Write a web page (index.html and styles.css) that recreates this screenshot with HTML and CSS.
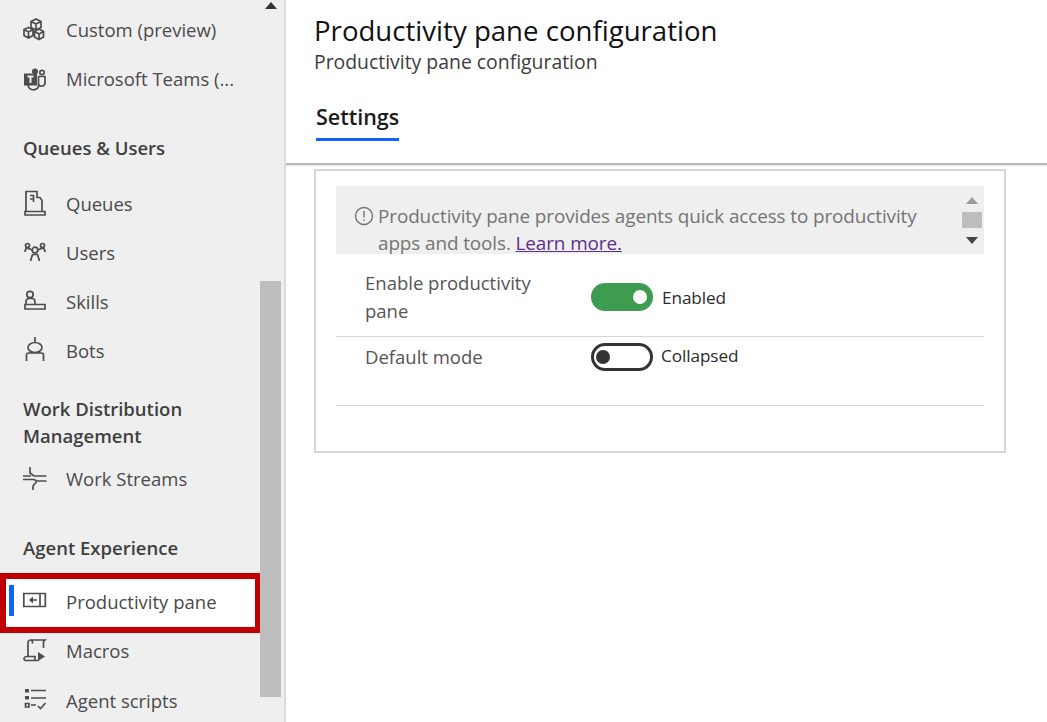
FILE: index.html
```html
<!DOCTYPE html>
<html lang="en">
<head>
    <meta charset="UTF-8">
    <title>Productivity pane configuration</title>
    <link rel="stylesheet" href="styles.css">
</head>
<body>
    <div class="page">
        <nav class="sidebar">
            <div class="nav-list">
                <a class="nav-item">
                    <svg class="nav-icon" viewBox="0 0 24 24"><path d="M13 1l5 2.500v6L13 12 8 9.500v-6zM8 3.500L13 6l5-2.500M13 6v6M5.500 9.500l4.500 2v6l-4.500 2.500L1 17.500v-6zM1 11.500l4.500 2.500 4.500-2.500M5.500 14v6M16 11l4.500 2.500v5.500L16 21.500 11.500 19v-5.500zM11.500 13.500L16 16l4.500-2.500M16 16v5.500"/></svg>
                    <span>Custom (preview)</span>
                </a>
                <a class="nav-item">
                    <svg class="nav-icon" viewBox="0 0 24 24"><path d="M5 18a5.500 5.500 0 0 0 10.500 1.500V9"/><path class="solid" d="M1 6.500h13v12H1z"/><circle class="solid" cx="12" cy="4.500" r="3"/><circle cx="19" cy="5.500" r="2.200"/><path d="M15.500 9.500h6.500v6a3.500 3.500 0 0 1-6.500 2"/><path class="cut" d="M4.500 9.500h6M7.500 9.500v6.500"/></svg>
                    <span>Microsoft Teams (...</span>
                </a>

                <h3 class="nav-heading heading-queues">Queues &amp; Users</h3>
                <a class="nav-item">
                    <svg class="nav-icon" viewBox="0 0 24 24"><path d="M3 19.500V-.500h11v6h3l2 3v11M2 19.500h20V23H2zM7 3.500h3.500V10M7 7h3"/></svg>
                    <span>Queues</span>
                </a>
                <a class="nav-item">
                    <svg class="nav-icon" viewBox="0 0 24 24"><circle cx="4.500" cy="4.500" r="2"/><circle cx="19.500" cy="4.500" r="2"/><circle cx="12" cy="9" r="2.800"/><path d="M2 11c0-2 .5-3.500 2.500-4l4.500 2M22 11c0-2-.5-3.500-2.500-4L15 9M7.500 20l2-6.500h5l2 6.500"/></svg>
                    <span>Users</span>
                </a>
                <a class="nav-item">
                    <svg class="nav-icon" viewBox="0 0 24 24"><circle cx="7" cy="4.500" r="3.200"/><path d="M3 14.500v-3a3 3 0 0 1 3-3h3a3 3 0 0 1 3 3v3M2 14.500h20v4.500H2z"/></svg>
                    <span>Skills</span>
                </a>
                <a class="nav-item">
                    <svg class="nav-icon" viewBox="0 0 24 24"><path d="M12 -2v5M5 8.500a7 5 0 0 1 14 0 7 5 0 0 1-14 0zM3.500 22v-6a2 2 0 0 1 2-2h13a2 2 0 0 1 2 2v6M9 8h.01M15 8h.01"/></svg>
                    <span>Bots</span>
                </a>

                <h3 class="nav-heading heading-work">Work Distribution Management</h3>
                <a class="nav-item">
                    <svg class="nav-icon" viewBox="0 0 24 24"><path d="M7 0v6l4 3h12.500M0 9h8M0 12.500h11l3 1.500h9.500M10 23v-4l4-5"/></svg>
                    <span>Work Streams</span>
                </a>

                <h3 class="nav-heading heading-agent">Agent Experience</h3>
                <a class="nav-item active">
                    <svg class="nav-icon" viewBox="0 0 24 24"><path d="M.8 3.500h21.500v13H.8zM17 3.500v13M14 10H9"/><path class="solid" d="M6 10l4-3.500v7z"/></svg>
                    <span>Productivity pane</span>
                </a>
                <a class="nav-item">
                    <svg class="nav-icon" viewBox="0 0 24 24"><path d="M5 17.500V3.500A2.500 2.500 0 0 1 7.500 1H22l-1.500 1.500V9M7.500 1c1.500 0 2 1 2 2.500v1M4 17.500h8v4H3.500A2 2 0 0 1 1 19.500c0-1 1.500-2 3-2zM12 21.500h4"/><path class="solid" d="M15 13l7 4.500-7 4.500z"/></svg>
                    <span>Macros</span>
                </a>
                <a class="nav-item">
                    <svg class="nav-icon" viewBox="0 0 24 24"><path class="solid" d="M2 0h4v3.500H2zM2 7h4v3.500H2z"/><path d="M2.500 14.500h3.500V18H2.500zM8 1.500h15M8 9h15M8 16h5M15 17l2.500 2.500 5-5.500"/></svg>
                    <span>Agent scripts</span>
                </a>
            </div>
            <div class="nav-scroll">
                <span class="arrow-up"></span>
                <div class="nav-thumb"></div>
            </div>
        </nav>

        <main class="content">
            <header class="content-header">
                <h1>Productivity pane configuration</h1>
                <p class="subtitle">Productivity pane configuration</p>
                <div class="tabs">
                    <span class="tab">Settings</span>
                </div>
            </header>

            <section class="card">
                <div class="notice">
                    <svg class="notice-icon" viewBox="0 0 20 20"><circle cx="10" cy="10" r="8.500"/><path d="M10 5v6.500M10 13.500v1.500"/></svg>
                    <p>Productivity pane provides agents quick access to productivity apps and tools. <a class="learn">Learn more.</a></p>
                    <div class="notice-scroll">
                        <span class="arrow-up arrow-light"></span>
                        <div class="notice-thumb"></div>
                        <span class="arrow-down"></span>
                    </div>
                </div>

                <div class="field field-enable">
                    <label>Enable productivity pane</label>
                    <div class="toggle on"><span class="knob"></span></div>
                    <span class="state">Enabled</span>
                </div>
                <div class="field field-mode">
                    <label>Default mode</label>
                    <div class="toggle"><span class="knob"></span></div>
                    <span class="state">Collapsed</span>
                </div>
            </section>
        </main>
    </div>
</body>
</html>
```

FILE: styles.css
```css
* {
    box-sizing: border-box;
}

body {
    margin: 0;
    background-color: #fff;
    font-family: "Open Sans", "Noto Sans", sans-serif;
    overflow: hidden;
}

.page {
    display: flex;
    height: 722px;
    overflow: hidden;
}

/* left navigation */
.sidebar {
    display: flex;
    flex: none;
    width: 286px;
    height: 722px;
    padding-left: 3px;
    background-color: #efefef;
    border-right: 2px solid #dcdcdc;
}

.nav-list {
    width: 257px;
    padding-top: 5px;
    flex: none;
}

.nav-item {
    position: relative;
    display: flex;
    align-items: center;
    height: 49px;
    padding-left: 20px;
    font-size: 18.500px;
    color: #4a4a4a;
}

.nav-item:last-child {
    margin-top: 1px;
}

.nav-icon {
    flex: none;
    width: 24px;
    height: 24px;
    margin-right: 19px;
    fill: none;
    stroke: #4d4d4d;
    stroke-width: 1.700;
    overflow: visible;
}

.nav-icon .solid {
    fill: #4d4d4d;
    stroke: none;
}

.nav-icon .cut {
    stroke: #efefef;
    stroke-width: 2;
}

.nav-heading {
    margin: 0;
    font-size: 18.500px;
    font-weight: 600;
    line-height: 27px;
    padding: 0 20px;
    color: #3f3f3f;
}

.heading-queues {
    padding-top: 31px;
    padding-bottom: 18px;
}

.heading-work {
    padding-top: 20px;
    padding-bottom: 5px;
}

.heading-agent {
    padding-top: 31px;
    padding-bottom: 16px;
}

.nav-item.active {
    background-color: #fff;
}

.nav-item.active::before {
    content: "";
    position: absolute;
    left: 6px;
    top: 8px;
    width: 5px;
    height: 31px;
    background-color: #0f62fe;
}

/* red annotation box from the screenshot */
.nav-item.active::after {
    content: "";
    position: absolute;
    left: -3px;
    right: -1px;
    top: -4px;
    bottom: -7px;
    border: 6px solid #c00000;
}

.nav-scroll {
    position: relative;
    flex: 1;
}

.nav-scroll .arrow-up {
    position: absolute;
    top: 2px;
    left: 5px;
}

.nav-thumb {
    position: absolute;
    top: 281px;
    left: 0;
    width: 21px;
    height: 416px;
    background-color: #bdbdbd;
}

.arrow-up {
    display: block;
    width: 0;
    height: 0;
    border-left: 6px solid transparent;
    border-right: 6px solid transparent;
    border-bottom: 7px solid #333;
}

.arrow-light {
    border-bottom-color: #9c9c9c;
}

.arrow-down {
    display: block;
    width: 0;
    height: 0;
    border-left: 6px solid transparent;
    border-right: 6px solid transparent;
    border-top: 7px solid #444;
}

/* main area */
.content {
    flex: 1;
    min-width: 0;
}

.content-header {
    height: 165px;
    padding: 13px 0 0 28px;
    border-bottom: 2px solid #b9b9b9;
    box-shadow: 0 1px 1px #e4e4e4;
}

h1 {
    margin: 0 0 1px;
    font-size: 27.600px;
    font-weight: 500;
    line-height: 34px;
    color: #111;
}

.subtitle {
    margin: 0;
    font-size: 19.400px;
    line-height: 27px;
    font-weight: 500;
    color: #3c3c3c;
}

.tabs {
    display: flex;
    margin-top: 28px;
    margin-left: 2px;
}

.tab {
    padding-bottom: 7px;
    font-size: 21.500px;
    font-weight: 600;
    line-height: 28px;
    color: #1b1b1b;
    border-bottom: 3px solid #0f62fe;
}

.card {
    width: 692px;
    height: 284px;
    margin: 4px 0 0 28px;
    padding: 15px 20px 0;
    border: 2px solid #d6d6d6;
}

.notice {
    display: flex;
    height: 68px;
    padding: 17px 0 0 18px;
    background-color: #efefef;
    font-size: 18.900px;
    line-height: 27px;
    color: #747474;
}

.notice-icon {
    flex: none;
    width: 20px;
    height: 20px;
    margin: 3px 4px 0 0;
    fill: none;
    stroke: #747474;
    stroke-width: 1.400;
}

.notice p {
    flex: none;
    width: 580px;
    max-height: 54px;
    margin: 0;
    letter-spacing: -0.1px;
}

.learn {
    color: #5c2d91;
    text-decoration: underline;
}

.notice-scroll {
    display: flex;
    flex: none;
    flex-direction: column;
    align-items: center;
    width: 27px;
    margin-top: -6px;
}

.notice-thumb {
    width: 20px;
    height: 16px;
    margin: 8px 0 9px;
    background-color: #bdbdbd;
}

.field {
    display: flex;
    align-items: center;
    padding-left: 29px;
    border-bottom: 1px solid #d6d6d6;
}

.field label {
    width: 226px;
    padding-right: 40px;
    flex: none;
    font-size: 18.500px;
    line-height: 28px;
    color: #555;
}

.field-enable {
    height: 83px;
    padding-top: 4px;
}

.field-mode {
    height: 69px;
    align-items: flex-start;
    padding-top: 6px;
}

.toggle {
    display: flex;
    align-items: center;
    flex: none;
    width: 62px;
    height: 28px;
    padding: 0 2px;
    border: 3px solid #333;
    border-radius: 14px;
    background-color: #fff;
}

.toggle.on {
    justify-content: flex-end;
    padding-right: 3px;
    background-color: #3d9c50;
    border-color: #3d9c50;
}

.knob {
    width: 14px;
    height: 14px;
    border-radius: 50%;
    background-color: #333;
}

.toggle.on .knob {
    background-color: #fff;
}

.state {
    margin-left: 9px;
    font-size: 17.200px;
    letter-spacing: -0.1px;
    color: #2b2b2b;
}

.field-mode .state {
    margin: 1px 0 0 8px;
}
```
